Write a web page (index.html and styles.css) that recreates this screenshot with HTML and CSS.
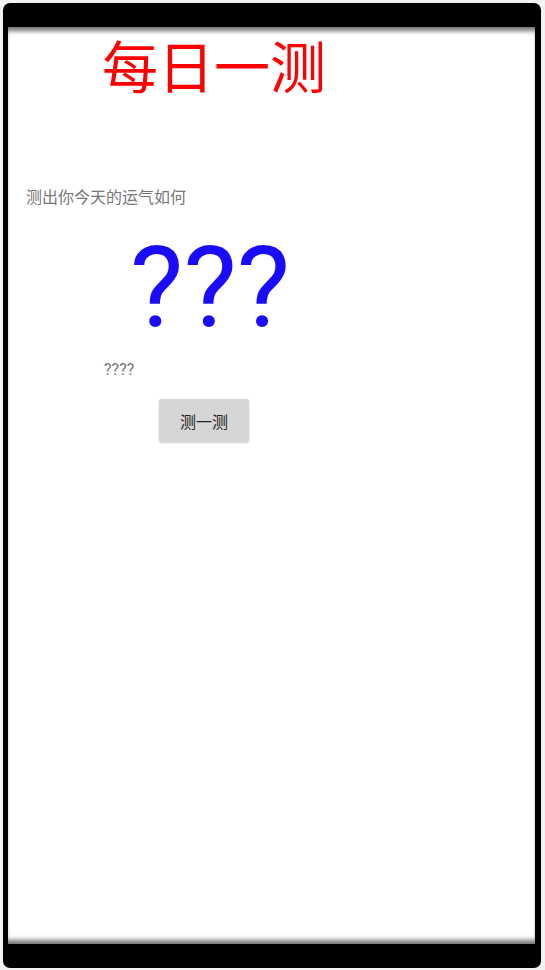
FILE: index.html
```html
<!DOCTYPE html>
<html lang="zh">
<head>
  <meta charset="UTF-8" />
  <meta name="viewport" content="width=device-width, initial-scale=1.0"/>
  <title>每日一测</title>
  <link rel="stylesheet" href="styles.css">
</head>
<body>
  <div class="phone">
    <div class="screen">
      <h1 class="title">每日一测</h1>
      <p class="subtitle">测出你今天的运气如何</p>
      <div class="result" id="result">???</div>
      <p class="detail" id="detail">????</p>
      <button class="test-btn" onclick="testLuck()">测一测</button>
    </div>
  </div>

  <script>
    const levels = ["大吉", "中吉", "小吉", "吉", "末吉", "凶"];

    function testLuck() {
      const i = Math.floor(Math.random() * levels.length);
      document.getElementById("result").textContent = levels[i];
      document.getElementById("detail").textContent = "今天的运气：" + levels[i];
    }
  </script>
</body>
</html>
```

FILE: styles.css
```css
* {
  box-sizing: border-box;
}

body {
  margin: 0;
  background-color: #f2f2f2;
  font-family: Roboto, "Noto Sans CJK SC", sans-serif;
}

.phone {
  margin: 3px 4px 2px 3px;
  height: 965px;
  padding: 24px 6px 24px 5px;
  background-color: #000;
  border-radius: 7px;
}

.screen {
  height: 100%;
  background-color: #fff;
  display: flex;
  flex-direction: column;
  align-items: flex-start;
  box-shadow: inset 0 7px 5px -3px rgba(0, 0, 0, 0.55),
              inset 0 -7px 5px -3px rgba(0, 0, 0, 0.55);
}

.title {
  margin: 14px 0 0 94px;
  font-size: 56px;
  line-height: 56px;
  font-weight: normal;
  color: #ff0000;
}

.subtitle {
  margin: 91px 0 0 18px;
  font-size: 16px;
  line-height: 20px;
  color: #777;
}

.result {
  margin: 24px 0 0 122px;
  font-size: 113px;
  line-height: 112px;
  color: #1a0cf8;
}

.detail {
  margin: 16px 0 0 96px;
  font-size: 16px;
  line-height: 20px;
  color: #777;
}

.test-btn {
  margin: 19px 0 0 151px;
  width: 90px;
  height: 43px;
  font-family: inherit;
  font-size: 16px;
  color: #222;
  background-color: #d6d6d6;
  border: none;
  border-radius: 3px;
  box-shadow: 0 1px 2px rgba(0, 0, 0, 0.2);
  cursor: pointer;
}
```
